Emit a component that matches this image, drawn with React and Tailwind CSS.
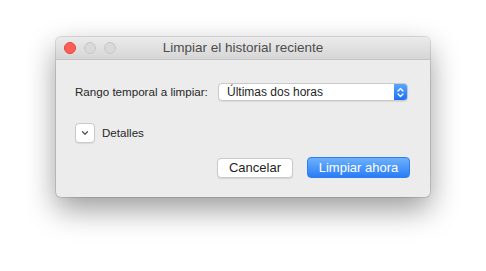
import React from 'react';

const Light = ({ color, border }) => (
  <div className={`w-3 h-3 rounded-full border ${color} ${border}`} />
);

const App = () => {
  return (
    <div
      className="w-[486px] h-[271px] bg-white pt-[37px] pl-[56px]"
      style={{ fontFamily: '"Liberation Sans", Arial, sans-serif' }}
    >
      <div className="w-[374px] h-[160px] bg-[#ececec] rounded-[5px] overflow-hidden shadow-[0_12px_30px_rgba(0,0,0,0.4),0_0_0_1px_rgba(0,0,0,0.12)] flex flex-col">
        {/* title bar */}
        <div className="relative h-[23px] shrink-0 bg-gradient-to-b from-[#ebebeb] to-[#d6d6d6] border-b border-[#c4c4c4] flex items-center pl-2 gap-2">
          <Light color="bg-[#fc5f57]" border="border-[#e0443e]" />
          <Light color="bg-[#d9d9d9]" border="border-[#c6c6c6]" />
          <Light color="bg-[#d9d9d9]" border="border-[#c6c6c6]" />
          <div className="absolute inset-0 flex items-center justify-center text-[13.5px] text-[#4d4d4d] pointer-events-none">
            Limpiar el historial reciente
          </div>
        </div>

        {/* body */}
        <div className="flex flex-col pt-[23px] pl-[19px] pr-[20px]">
          <div className="flex items-center pr-[2px]">
            <span className="text-[11.6px] text-[#262626] w-[143px]">Rango temporal a limpiar:</span>
            <div className="flex-1 h-[18px] bg-white rounded-[4px] border border-[#c9c9c9] shadow-[0_1px_1px_rgba(0,0,0,0.08)] flex items-stretch overflow-hidden">
              <span className="flex-1 pl-[8px] text-[12px] text-[#1f1f1f] leading-[16px]">Últimas dos horas</span>
              <div className="w-[13px] bg-gradient-to-b from-[#5aa6fb] to-[#1d6ff4] flex items-center justify-center">
                <svg width="7" height="11" viewBox="0 0 7 11" fill="none" stroke="white" strokeWidth="1.3" strokeLinecap="round" strokeLinejoin="round">
                  <path d="M1 4 L3.5 1.5 L6 4" />
                  <path d="M1 7 L3.5 9.5 L6 7" />
                </svg>
              </div>
            </div>
          </div>

          <div className="flex items-center mt-[22px] gap-[7px]">
            <div className="w-[20px] h-[20px] bg-white rounded-[4px] border border-[#c9c9c9] shadow-[0_1px_1px_rgba(0,0,0,0.08)] flex items-center justify-center">
              <svg width="8" height="6" viewBox="0 0 8 6" fill="none" stroke="#555" strokeWidth="1.3" strokeLinecap="round" strokeLinejoin="round">
                <path d="M1.5 1.8 L4 4.3 L6.5 1.8" />
              </svg>
            </div>
            <span className="text-[11.6px] text-[#262626]">Detalles</span>
          </div>

          <div className="flex justify-end items-center gap-[14px] mt-[14px]">
            <button className="w-[76px] h-[20px] bg-white rounded-[4px] border border-[#c9c9c9] shadow-[0_1px_1px_rgba(0,0,0,0.1)] text-[13px] text-[#1f1f1f] leading-none">
              Cancelar
            </button>
            <button className="w-[103px] h-[21px] rounded-[4px] bg-gradient-to-b from-[#6cb1fb] to-[#2a7cf6] border border-[#2f7ef0] text-[13px] text-white leading-none">
              Limpiar ahora
            </button>
          </div>
        </div>
      </div>
    </div>
  );
};

export default App;
